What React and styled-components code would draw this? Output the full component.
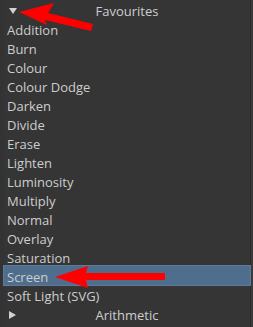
import React from "react";
import styled, { createGlobalStyle } from "styled-components";

const GlobalStyle = createGlobalStyle`
  html, body {
    margin: 0;
    padding: 0;
    background: #3a3a3a;
  }
  body {
    font-family: "Open Sans", "Noto Sans", sans-serif;
  }
`;

const blendModes = [
  "Addition",
  "Burn",
  "Colour",
  "Colour Dodge",
  "Darken",
  "Divide",
  "Erase",
  "Lighten",
  "Luminosity",
  "Multiply",
  "Normal",
  "Overlay",
  "Saturation",
  "Screen",
  "Soft Light (SVG)",
];

function App() {
  return (
    <>
      <GlobalStyle />
      <Page>
        <Panel>
          <GroupHeader>
            <Arrow $open />
            <HeaderLabel>Favourites</HeaderLabel>
          </GroupHeader>
          {blendModes.map((name) => (
            <Row key={name} $selected={name === "Screen"}>
              {name}
            </Row>
          ))}
          <GroupHeader>
            <Arrow />
            <HeaderLabel>Arithmetic</HeaderLabel>
          </GroupHeader>
        </Panel>
        <Callouts width="253" height="327" viewBox="0 0 253 327">
          <polygon
            fill="#ff0000"
            points="19,12 54,3 48,13 93,24 91,31 45,20 47,25"
          />
          <polygon
            fill="#ff0000"
            points="55,277 88,266 86,273 165,273 165,280 86,280 88,288"
          />
        </Callouts>
      </Page>
    </>
  );
}

export default App;

const Page = styled.div`
  position: relative;
  width: 253px;
  height: 327px;
  overflow: hidden;
`;

const Panel = styled.div`
  width: 246px;
  height: 327px;
  background: #353535;
  border-left: 4px solid #333333;
  border-right: 1px solid #2a2a2a;
  display: flex;
  flex-direction: column;
`;

const GroupHeader = styled.div`
  position: relative;
  height: 19px;
  display: flex;
  align-items: flex-start;
  justify-content: center;
`;

const Arrow = styled.span`
  position: absolute;
  left: 5px;
  top: ${(p) => (p.$open ? "8px" : "7px")};
  width: 0;
  height: 0;
  border-style: solid;
  border-color: transparent;
  ${(p) =>
    p.$open
      ? `border-width: 6px 4px 0 4px; border-top-color: #d2d2d2;`
      : `border-width: 4px 0 4px 7px; border-left-color: #d2d2d2;`}
`;

const HeaderLabel = styled.span`
  font-size: 13px;
  line-height: 16px;
  padding-top: 3px;
  color: #cdcdcd;
`;

const Row = styled.div`
  box-sizing: border-box;
  height: 19px;
  padding: 3px 0 0 3px;
  font-size: 13px;
  line-height: 16px;
  color: #cdcdcd;
  white-space: nowrap;
  background: ${(p) => (p.$selected ? "#4f6d8c" : "transparent")};
  box-shadow: ${(p) => (p.$selected ? "0 0 0 1px #5d7a97" : "none")};
`;

const Callouts = styled.svg`
  position: absolute;
  left: 0;
  top: 0;
  pointer-events: none;
`;
